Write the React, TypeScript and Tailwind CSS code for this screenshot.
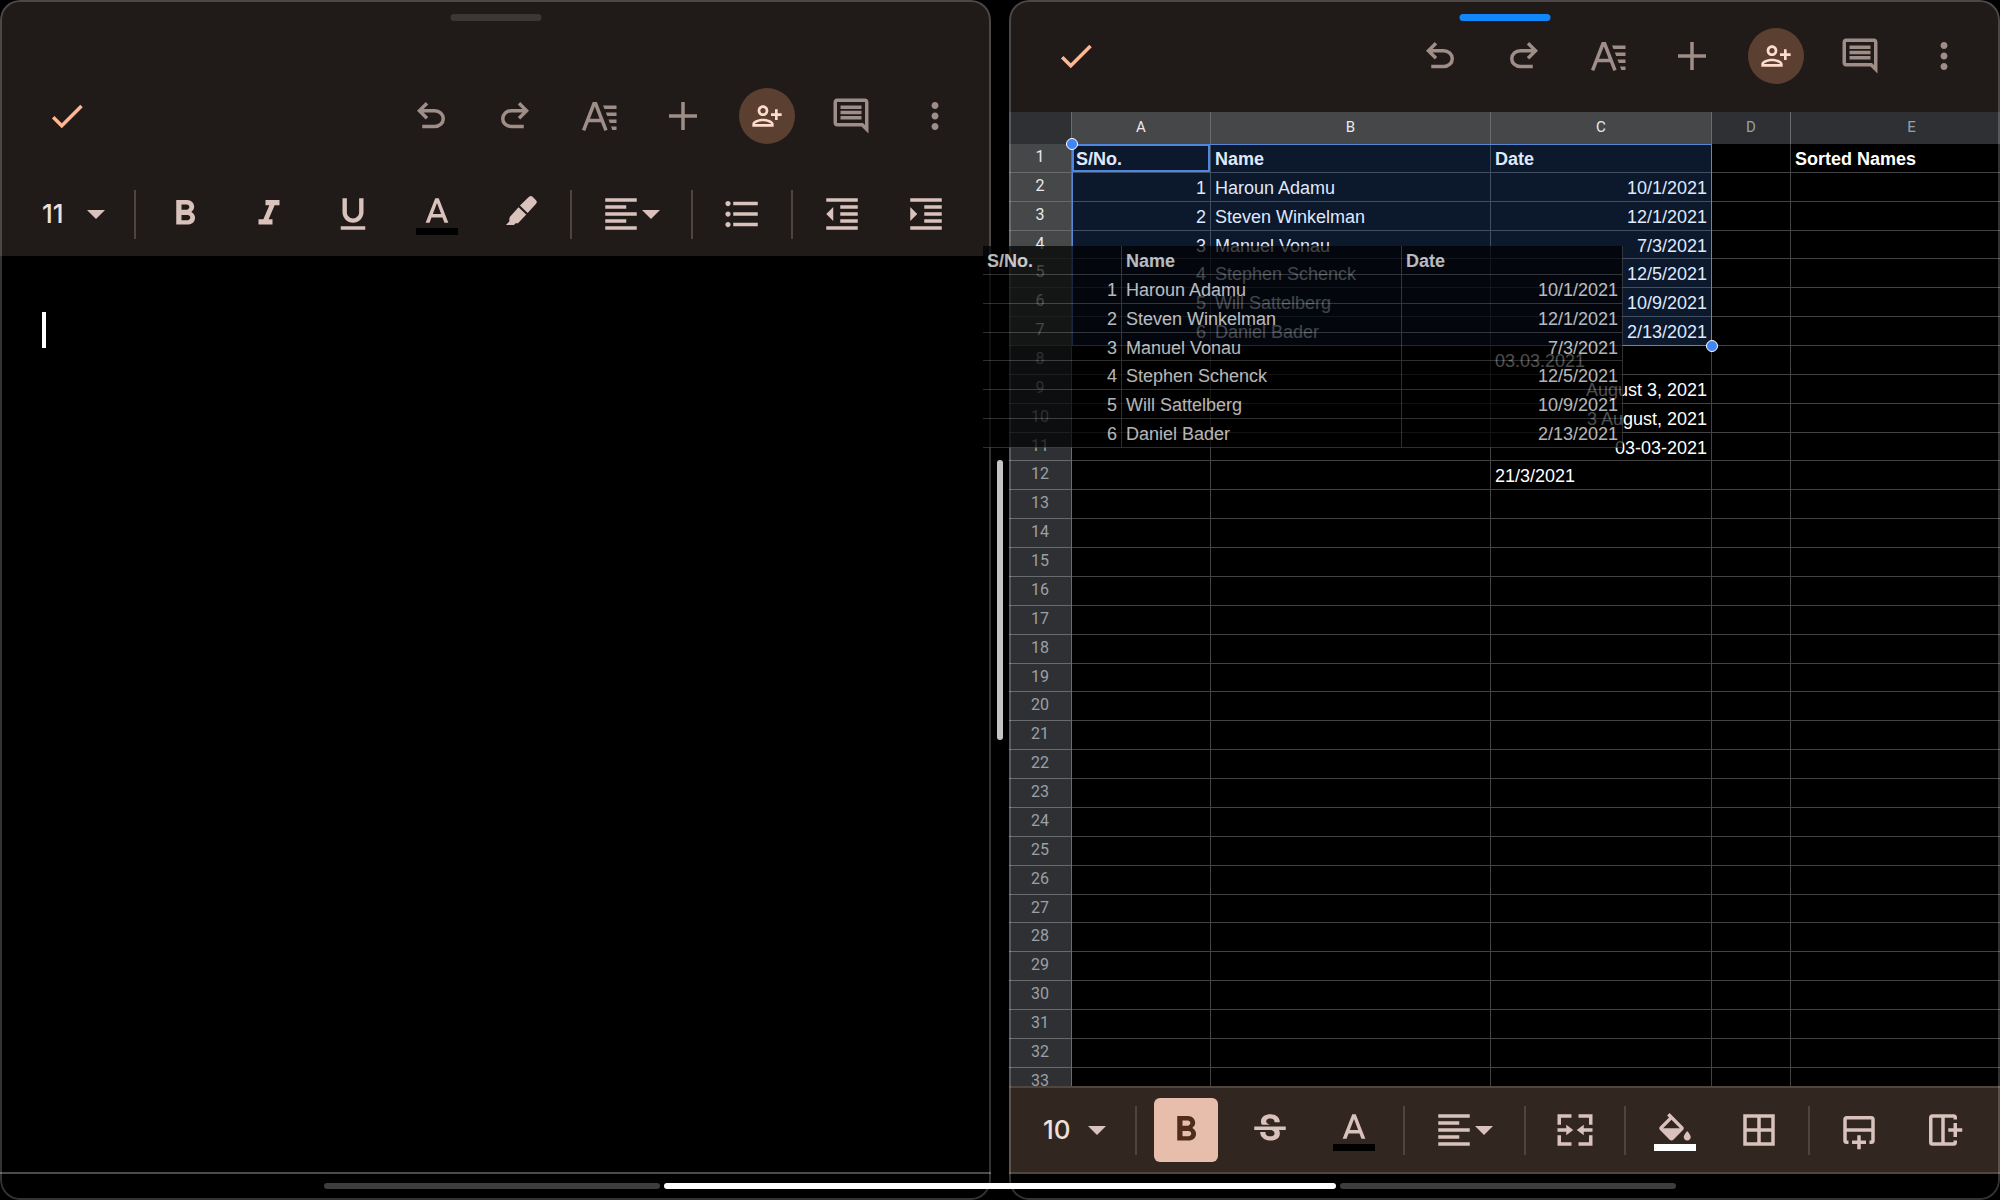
import type { ReactNode } from "react";
import {
  MdBorderAll, MdCheck, MdFormatAlignLeft, MdFormatBold, MdFormatIndentDecrease, MdFormatIndentIncrease,
  MdFormatItalic, MdFormatListBulleted, MdFormatUnderlined, MdMoreVert, MdOutlineComment, MdStrikethroughS,
} from "react-icons/md";

type Cell = { text: string; right?: boolean; bold?: boolean };
type Row = Record<string, Cell>;

const COLUMNS = ["A", "B", "C", "D", "E"];
const ROW_COUNT = 33;
const SELECTED_ROWS = 7;
// rows are 28.87px on the device, so every few rows one comes out a pixel short
const SHORT_ROWS = [4, 11, 19, 27];

const PEOPLE = [
  ["Haroun Adamu", "10/1/2021"],
  ["Steven Winkelman", "12/1/2021"],
  ["Manuel Vonau", "7/3/2021"],
  ["Stephen Schenck", "12/5/2021"],
  ["Will Sattelberg", "10/9/2021"],
  ["Daniel Bader", "2/13/2021"],
];

const SELECTION: Row[] = [
  { A: { text: "S/No.", bold: true }, B: { text: "Name", bold: true }, C: { text: "Date", bold: true } },
  ...PEOPLE.map(([name, date], i) => ({
    A: { text: String(i + 1), right: true }, B: { text: name }, C: { text: date, right: true },
  })),
];

const SHEET: Row[] = [
  { ...SELECTION[0], E: { text: "Sorted Names", bold: true } },
  ...SELECTION.slice(1),
  { C: { text: "03.03.2021" } },
  { C: { text: "August 3, 2021", right: true } },
  { C: { text: "3 August, 2021", right: true } },
  { C: { text: "03-03-2021", right: true } },
  { C: { text: "21/3/2021" } },
];

function rowHeight(n: number) {
  return SHORT_ROWS.includes(n) ? "h-[28px]" : "h-[29px]";
}

function Svg({ children, className = "size-[42px]", viewBox = "0 0 24 24" }: { children: ReactNode; className?: string; viewBox?: string }) {
  return <svg viewBox={viewBox} className={className} fill="currentColor" aria-hidden="true">{children}</svg>;
}

const UndoIcon = () => (
  <Svg viewBox="0 -960 960 960">
    <path d="M280-200v-80h284q63 0 109.5-40T720-420q0-60-46.5-100T564-560H312l104 104-56 56-200-200 200-200 56 56-104 104h252q97 0 166.5 63T800-420q0 94-69.5 157T564-200H280Z" />
  </Svg>
);

const RedoIcon = () => (
  <Svg viewBox="0 -960 960 960">
    <path d="M396-200q-97 0-166.5-63T160-420q0-94 69.5-157T396-640h252L544-744l56-56 200 200-200 200-56-56 104-104H396q-63 0-109.5 40T240-420q0 60 46.5 100T396-280h284v80H396Z" />
  </Svg>
);

const FormatIcon = () => (
  <Svg>
    <path d="M3.2 20.2 9.1 5h1l5.9 15.2M5.5 14.6h8.2" fill="none" stroke="currentColor" strokeWidth="2" />
    <path d="M14.3 6H22v2h-6.9zM15.9 10H22v2h-5.3zM17.4 14H22v2h-3.8zM18.9 18H22v2h-2.4z" />
  </Svg>
);

const PlusIcon = () => <Svg><path d="M11 4h2v7h7v2h-7v7h-2v-7H4v-2h7z" /></Svg>;

const PersonAddIcon = () => (
  <Svg className="size-8">
    <path d="M13 8c0-2.21-1.79-4-4-4S5 5.79 5 8s1.79 4 4 4 4-1.79 4-4zm-2 0c0 1.1-.9 2-2 2s-2-.9-2-2 .9-2 2-2 2 .9 2 2zM1 18v2h16v-2c0-2.66-5.33-4-8-4s-8 1.34-8 4zm2 0c.2-.71 3.3-2 6-2 2.69 0 5.77 1.28 6 2H3zM20 15v-3h3v-2h-3V7h-2v3h-3v2h3v3h2z" />
  </Svg>
);

const TextColorIcon = () => (
  <Svg>
    <path d="M11 3 5.5 17h2.25l1.12-3h6.25l1.12 3h2.25L13 3h-2zm-1.38 9L12 5.67 14.38 12H9.62z" />
    <path d="M0 20h24v4H0z" fill="#000" />
  </Svg>
);

const FillColorIcon = () => (
  <Svg>
    <path d="M16.56 9.94 8.9 2.28 7.49 3.69l1.1 1.1-5.15 5.15c-.59.59-.59 1.54 0 2.12l5.5 5.5c.29.29.68.44 1.06.44s.77-.15 1.06-.44l5.5-5.5c.59-.58.59-1.53 0-2.12zM5.21 11 10 6.21 14.79 11H5.21zM19 12.5s-2 2.17-2 3.5c0 1.1.9 2 2 2s2-.9 2-2c0-1.33-2-3.5-2-3.5z" />
    <path d="M0 20h24v4H0z" fill="#fff" />
  </Svg>
);

const HighlighterIcon = () => (
  <Svg>
    <path d="M16.6 2.2a1.4 1.4 0 0 1 2 0l2 2a1.4 1.4 0 0 1 0 2L15.8 11.4 11.4 7.2z" />
    <path d="m10.6 8.1 4.4 4.2-4.7 5H8.9l-.9 1H3.4l2-2.2c-.3-1 0-2 .3-2.6z" />
  </Svg>
);

const MergeIcon = () => (
  <Svg>
    <path d="M2 3h8v2H4v4H2zM14 3h8v6h-2V5h-6zM2 15h2v4h6v2H2zM20 15h2v6h-8v-2h6zM2 11h5V9l4 3-4 3v-2H2zM22 11h-5V9l-4 3 4 3v-2h5z" />
  </Svg>
);

const AddRowIcon = () => (
  <Svg>
    <path d="M6 19H5a1 1 0 0 1-1-1V6a1 1 0 0 1 1-1h14a1 1 0 0 1 1 1v12a1 1 0 0 1-1 1h-1M4 12h16M12 15v8M8 19h8" fill="none" stroke="currentColor" strokeWidth="2" />
  </Svg>
);

const AddColumnIcon = () => (
  <Svg>
    <path d="M19 6V5a1 1 0 0 0-1-1H6a1 1 0 0 0-1 1v14a1 1 0 0 0 1 1h12a1 1 0 0 0 1-1v-1M12 4v16M19 8v8M15 12h8" fill="none" stroke="currentColor" strokeWidth="2" />
  </Svg>
);

const Caret = () => <Svg viewBox="0 0 10 5" className="h-[9px] w-[18px] shrink-0"><path d="M0 0h10L5 5z" /></Svg>;

const Divider = () => <span className="mx-[7px] h-[49px] w-0.5 shrink-0 bg-[#50443f]" />;

function ToolButton({ label, children }: { label: string; children: ReactNode }) {
  return (
    <button type="button" aria-label={label} className="flex size-[84px] shrink-0 items-center justify-center">
      {children}
    </button>
  );
}

function AlignButton() {
  return (
    <button type="button" aria-label="Align" className="flex h-[84px] w-[105px] shrink-0 items-center pl-[21px]">
      <MdFormatAlignLeft size={42} />
      <Caret />
    </button>
  );
}

function FontSize({ id, value }: { id: string; value: string }) {
  return (
    <div className="relative flex h-[84px] w-[119px] shrink-0 items-center">
      <select id={id} aria-label="Font size" defaultValue={value} className="h-full w-full appearance-none bg-transparent pb-0.5 pl-[34px] font-[Inter,sans-serif] text-[26px] font-medium text-[#ede0dc]">
        <option>{value}</option>
      </select>
      <span className="pointer-events-none absolute left-[79px]"><Caret /></span>
    </div>
  );
}

function AppBar() {
  return (
    <div className="flex h-28 items-center justify-between pr-3.5 pl-[25px] text-[#9f8d87]">
      <span className="text-[#ffb691]"><ToolButton label="Done"><MdCheck size={42} /></ToolButton></span>
      <div className="flex">
        <ToolButton label="Undo"><UndoIcon /></ToolButton>
        <ToolButton label="Redo"><RedoIcon /></ToolButton>
        <ToolButton label="Format"><FormatIcon /></ToolButton>
        <ToolButton label="Insert"><PlusIcon /></ToolButton>
        <ToolButton label="Share">
          <span className="flex size-14 items-center justify-center rounded-full bg-[#5b4032] text-[#ffdbcc]"><PersonAddIcon /></span>
        </ToolButton>
        <ToolButton label="Comments"><MdOutlineComment size={42} /></ToolButton>
        <ToolButton label="More options"><MdMoreVert size={42} /></ToolButton>
      </div>
    </div>
  );
}

function Pane({ active, children }: { active?: boolean; children: ReactNode }) {
  return (
    <section className="relative flex h-full flex-col overflow-hidden rounded-[20px] bg-black">
      {children}
      <span className={`absolute top-3.5 left-1/2 h-[7px] w-[91px] -translate-x-1/2 rounded-full ${active ? "bg-[#1286fb]" : "bg-[#3c3634]"}`} />
      <span className="pointer-events-none absolute inset-0 rounded-[20px] border-2 border-white/20" />
    </section>
  );
}

function DocsPane() {
  return (
    <Pane>
      <header className="bg-[#201a18] pt-[60px]">
        <AppBar />
        <div className="flex h-[84px] items-center pl-2 text-[#d8c2bb]">
          <FontSize id="doc-size" value="11" />
          <Divider />
          <ToolButton label="Bold"><MdFormatBold size={42} /></ToolButton>
          <ToolButton label="Italic"><MdFormatItalic size={42} /></ToolButton>
          <ToolButton label="Underline"><MdFormatUnderlined size={42} /></ToolButton>
          <ToolButton label="Text color"><TextColorIcon /></ToolButton>
          <ToolButton label="Highlight"><HighlighterIcon /></ToolButton>
          <Divider />
          <AlignButton />
          <Divider />
          <ToolButton label="Bulleted list"><MdFormatListBulleted size={42} /></ToolButton>
          <Divider />
          <ToolButton label="Decrease indent"><MdFormatIndentDecrease size={42} /></ToolButton>
          <ToolButton label="Increase indent"><MdFormatIndentIncrease size={42} /></ToolButton>
        </div>
      </header>
      <div className="relative flex flex-1">
        <textarea aria-label="Document" className="flex-1 resize-none bg-black px-[42px] py-14 text-[28px] text-white outline-none" />
        <span className="absolute top-14 left-[42px] h-9 w-1 bg-white" />
      </div>
      <div className="h-7 border-t-2 border-[#4a4a48]" />
    </Pane>
  );
}

function DataCell({ cell }: { cell?: Cell }) {
  return (
    <td className={`border-r border-b border-[#434343] px-1 pt-0.5 leading-6 whitespace-nowrap ${cell?.right ? "text-right" : "text-left"} ${cell?.bold ? "font-bold" : ""}`}>
      {cell?.text}
    </td>
  );
}

function SheetColumns() {
  return (
    <>
      <col className="w-[139px]" />
      <col className="w-[280px]" />
      <col className="w-[221px]" />
    </>
  );
}

function Sheet() {
  return (
    <div className="relative min-h-0 flex-1 overflow-hidden">
      {/* column E runs past the right edge of the pane */}
      <table className="w-full min-w-[1024px] table-fixed border-separate border-spacing-0 font-['Liberation_Sans',Arial,sans-serif] text-[18px] text-white">
        <colgroup>
          <col className="w-[63px]" />
          <SheetColumns />
          <col className="w-[79px]" />
          <col />
        </colgroup>
        <thead>
          <tr className="h-8 font-[Roboto,sans-serif] text-[15px]">
            <td className="border-r border-[#6a6b6e] bg-[#2f3034]" />
            {COLUMNS.map((c, i) => (
              <th key={c} scope="col" className={`border-r border-[#6a6b6e] p-0 pb-0.5 font-normal ${i < 3 ? "bg-[#464748] text-[#e8eaed]" : "bg-[#2f3034] text-[#9aa0a6]"}`}>{c}</th>
            ))}
          </tr>
        </thead>
        <tbody>
          {Array.from({ length: ROW_COUNT }, (_, i) => i + 1).map((n) => (
            <tr key={n} className={rowHeight(n)}>
              <th scope="row" className={`border-r border-b border-[#6a6b6e] p-0 pb-0.5 font-[Roboto,sans-serif] text-[16px] leading-5 font-normal ${n <= SELECTED_ROWS ? "bg-[#464748] text-[#e8eaed]" : "bg-[#2f3034] text-[#9aa0a6]"}`}>{n}</th>
              {COLUMNS.map((c) => <DataCell key={c} cell={SHEET[n - 1]?.[c]} />)}
            </tr>
          ))}
        </tbody>
      </table>

      {/* selected range A1:C7 */}
      <div className="pointer-events-none absolute top-8 left-[63px] h-[202px] w-[640px] border border-[#5a86d8] bg-[#4285f4]/18">
        <div className="-mt-px -ml-px h-[28px] w-[138px] border-2 border-[#4f86e0]" />
        <span className="absolute -top-[7px] -left-[7px] size-3 rounded-full border border-white bg-[#4285f4]" />
        <span className="absolute -right-[7px] -bottom-[7px] size-3 rounded-full border border-white bg-[#4285f4]" />
      </div>
    </div>
  );
}

function SheetsPane() {
  return (
    <Pane active>
      <header className="bg-[#201a18]"><AppBar /></header>
      <Sheet />
      <div className="flex h-[88px] shrink-0 items-center border-y-2 border-[#51453f] bg-[#322621] text-[#d8c2bb]">
        <FontSize id="sheet-size" value="10" />
        <Divider />
        <ToolButton label="Bold">
          <span className="flex size-16 items-center justify-center rounded-md bg-[#e6beab] text-[#4f2c1b]"><MdFormatBold size={42} /></span>
        </ToolButton>
        <ToolButton label="Strikethrough"><MdStrikethroughS size={42} /></ToolButton>
        <ToolButton label="Text color"><TextColorIcon /></ToolButton>
        <Divider />
        <AlignButton />
        <Divider />
        <ToolButton label="Merge cells"><MergeIcon /></ToolButton>
        <Divider />
        <ToolButton label="Fill color"><FillColorIcon /></ToolButton>
        <ToolButton label="Borders"><MdBorderAll size={42} /></ToolButton>
        <Divider />
        <ToolButton label="Insert row"><AddRowIcon /></ToolButton>
        <ToolButton label="Insert column"><AddColumnIcon /></ToolButton>
      </div>
      <div className="h-[26px] shrink-0" />
    </Pane>
  );
}

function DragGhost() {
  return (
    <table className="pointer-events-none absolute top-[246px] -left-[26px] w-[640px] table-fixed border-separate border-spacing-0 bg-black font-['Liberation_Sans',Arial,sans-serif] text-[18px] text-white opacity-70">
      <colgroup><SheetColumns /></colgroup>
      <tbody>
        {SELECTION.map((row, i) => (
          <tr key={i} className={rowHeight(i + 1)}>
            {["A", "B", "C"].map((c) => <DataCell key={c} cell={row[c]} />)}
          </tr>
        ))}
      </tbody>
    </table>
  );
}

export default function App() {
  return (
    <main className="relative flex h-screen overflow-hidden bg-black">
      <div className="min-w-0 flex-1"><DocsPane /></div>
      <div className="flex w-[18px] shrink-0 items-center justify-center">
        <span className="h-[280px] w-1.5 rounded-full bg-[#c4c4c4]" />
      </div>
      <div className="relative min-w-0 flex-1">
        <SheetsPane />
        <DragGhost />
      </div>
      <nav aria-label="Recent apps" className="pointer-events-none absolute inset-x-0 bottom-[11px] flex justify-center gap-1">
        <span className="h-1.5 w-[336px] rounded-full bg-[#3d3d3d]" />
        <span className="h-1.5 w-[672px] rounded-full bg-white" />
        <span className="h-1.5 w-[336px] rounded-full bg-[#3d3d3d]" />
      </nav>
    </main>
  );
}
